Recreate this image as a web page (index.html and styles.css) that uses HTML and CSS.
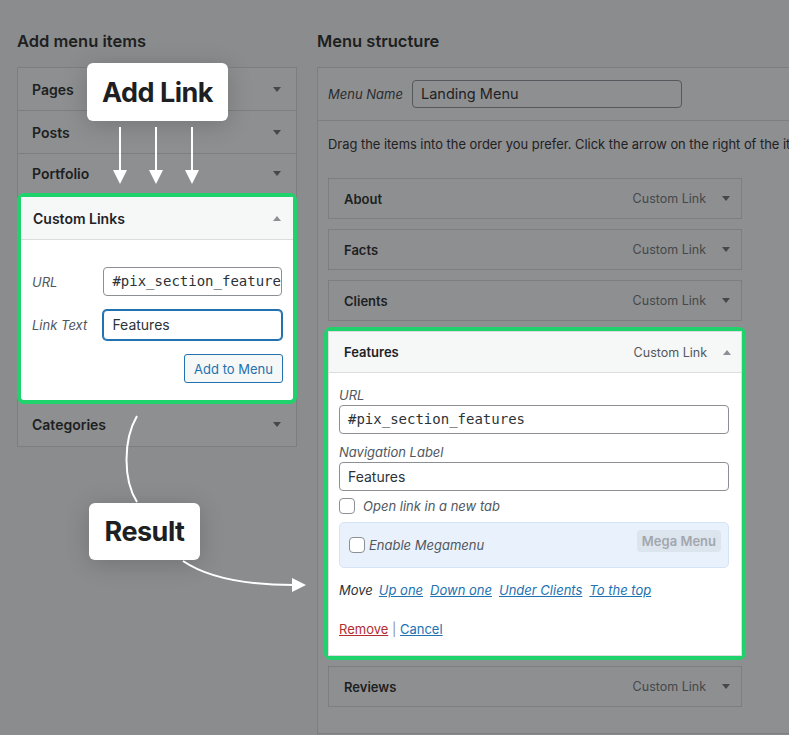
FILE: index.html
```html
<!DOCTYPE html>
<html lang="en">
<head>
    <meta charset="UTF-8">
    <title>Menus</title>
    <link rel="stylesheet" href="styles.css">
</head>
<body>
    <div class="page">
        <section class="col-left">
            <h2>Add menu items</h2>
            <div class="accordion">
                <div class="acc-row first">Pages <span class="caret"></span></div>
                <div class="acc-row">Posts <span class="caret"></span></div>
                <div class="acc-row short">Portfolio <span class="caret"></span></div>
                <div class="acc-open highlight">
                    <div class="acc-head">Custom Links <span class="caret up"></span></div>
                    <div class="acc-body">
                        <div class="field">
                            <label>URL</label>
                            <div class="text-input mono">#pix_section_features</div>
                        </div>
                        <div class="field">
                            <label>Link Text</label>
                            <div class="text-input focused">Features</div>
                        </div>
                        <div class="actions">
                            <button class="btn-secondary">Add to Menu</button>
                        </div>
                    </div>
                </div>
                <div class="acc-row last">Categories <span class="caret"></span></div>
            </div>
        </section>

        <section class="col-right">
            <h2>Menu structure</h2>
            <div class="menu-box">
                <div class="menu-name">
                    <label>Menu Name</label>
                    <div class="text-input name-input">Landing Menu</div>
                </div>
                <div class="menu-body">
                    <p class="hint">Drag the items into the order you prefer. Click the arrow on the right of the item to reveal additional configuration options.</p>
                    <div class="items">
                        <div class="item">
                            <span class="item-title">About</span>
                            <span class="item-type">Custom Link <span class="caret"></span></span>
                        </div>
                        <div class="item">
                            <span class="item-title">Facts</span>
                            <span class="item-type">Custom Link <span class="caret"></span></span>
                        </div>
                        <div class="item">
                            <span class="item-title">Clients</span>
                            <span class="item-type">Custom Link <span class="caret"></span></span>
                        </div>
                        <div class="item-open highlight">
                            <div class="item-head">
                                <span class="item-title">Features</span>
                                <span class="item-type">Custom Link <span class="caret up"></span></span>
                            </div>
                            <div class="item-body">
                                <label class="small-label">URL</label>
                                <div class="text-input mono wide">#pix_section_features</div>
                                <label class="small-label second">Navigation Label</label>
                                <div class="text-input wide">Features</div>
                                <div class="check-row">
                                    <span class="checkbox"></span>
                                    <span class="check-label">Open link in a new tab</span>
                                </div>
                                <div class="mega">
                                    <span class="checkbox"></span>
                                    <span class="check-label">Enable Megamenu</span>
                                    <span class="mega-btn">Mega Menu</span>
                                </div>
                                <div class="move-row">
                                    <span class="move-label">Move</span>
                                    <a href="#">Up one</a>
                                    <a href="#">Down one</a>
                                    <a href="#">Under Clients</a>
                                    <a href="#">To the top</a>
                                </div>
                                <div class="remove-row">
                                    <a class="remove" href="#">Remove</a> <span class="sep">|</span> <a href="#">Cancel</a>
                                </div>
                            </div>
                        </div>
                        <div class="item">
                            <span class="item-title">Reviews</span>
                            <span class="item-type">Custom Link <span class="caret"></span></span>
                        </div>
                    </div>
                </div>
            </div>
        </section>
    </div>

    <!-- annotations on top of the screenshot -->
    <div class="callout callout-add">Add Link</div>
    <div class="callout callout-result">Result</div>

    <svg class="arrows" width="789" height="735" viewBox="0 0 789 735">
        <g stroke="#fff" stroke-width="2" fill="none">
            <line x1="120" y1="127" x2="120" y2="172"/>
            <line x1="156" y1="127" x2="156" y2="172"/>
            <line x1="192" y1="127" x2="192" y2="172"/>
            <path d="M137 416 C 123 440, 123 480, 137 502"/>
            <path d="M183 561 C 208 578, 245 585, 294 585"/>
        </g>
        <g fill="#fff">
            <polygon points="113,170 127,170 120,184"/>
            <polygon points="149,170 163,170 156,184"/>
            <polygon points="185,170 199,170 192,184"/>
            <polygon points="292,578 306,585 292,592"/>
        </g>
    </svg>
</body>
</html>
```

FILE: styles.css
```css
* {
    box-sizing: border-box;
}

html, body {
    margin: 0;
}

body {
    width: 789px;
    height: 735px;
    position: relative;
    overflow: hidden;
    background: #8b8c8e;
    font-family: 'Inter', 'Noto Sans', sans-serif;
    font-size: 13px;
    color: #1d1f21;
}

.page {
    display: flex;
    gap: 20px;
    padding-left: 17px;
}

.col-left {
    width: 280px;
    flex: none;
}

.col-right {
    width: 472px;
    flex: none;
    overflow: hidden;
}

h2 {
    font-size: 16.5px;
    font-weight: 600;
    line-height: 20px;
    margin: 31px 0 16px;
    color: #1d1f21;
}

/* dimmed caret */
.caret {
    display: inline-block;
    width: 0;
    height: 0;
    border-left: 4px solid transparent;
    border-right: 4px solid transparent;
    border-top: 5px solid #45484b;
}

.caret.up {
    border-top: none;
    border-bottom: 5px solid #8c8f94;
}

/* left accordion */
.accordion {
    border: 1px solid #7d7e80;
    background: #8e8f91;
}

.acc-row {
    height: 43px;
    border-top: 1px solid #7d7e80;
    display: flex;
    align-items: center;
    justify-content: space-between;
    padding: 0 15px 0 14px;
    font-size: 14px;
    font-weight: 600;
}

.acc-row.first {
    border-top: none;
    height: 42px;
}

.acc-row.short {
    height: 40px;
}

.acc-row.last {
    border-top: none;
    height: 42px;
    padding-bottom: 2px;
}

.highlight {
    border: 4px solid #1fd26c;
    border-radius: 7px;
}

.acc-open {
    margin: 0 -1px;
    background: #fff;
    color: #1d2327;
}

.acc-head {
    height: 43px;
    background: #f6f7f7;
    border-bottom: 1px solid #dcdcde;
    display: flex;
    align-items: center;
    justify-content: space-between;
    padding: 0 12px;
    font-size: 14px;
    font-weight: 600;
}

.acc-body {
    padding: 27px 11px 17px 11px;
}

.field {
    display: flex;
    align-items: center;
    margin-bottom: 14px;
}

.field label {
    width: 72px;
    font-style: italic;
    color: #50575e;
    font-size: 13px;
}

.text-input {
    font-size: 14px;
    line-height: 27px;
    color: #2c3338;
    height: 29px;
    border: 1px solid #8c8f94;
    border-radius: 4px;
    padding: 0 8px;
    background: #fff;
    white-space: nowrap;
    overflow: hidden;
}

.field .text-input {
    width: 180px;
}

.text-input.mono {
    font-family: 'DejaVu Sans Mono', 'Liberation Mono', monospace;
    font-size: 14px;
}

.text-input.focused {
    height: 30px;
    line-height: 28px;
    border-color: #2271b1;
    box-shadow: 0 0 0 1px #2271b1;
}

.actions {
    display: flex;
    justify-content: flex-end;
    margin-right: -1px;
}

.btn-secondary {
    height: 29px;
    width: 99px;
    border: 1px solid #2271b1;
    border-radius: 3px;
    background: #f6f7f7;
    color: #2271b1;
    font-family: 'Inter', 'Noto Sans', sans-serif;
    font-size: 13px;
    padding: 0;
}

/* right column */
.menu-box {
    border: 1px solid #7d7e80;
    border-right: none;
    background: #8e8f91;
    height: 667px;
    width: 520px;
}

.menu-name {
    height: 53px;
    border-bottom: 1px solid #7d7e80;
    display: flex;
    align-items: center;
    padding-left: 10px;
}

.menu-name label {
    width: 84px;
    font-style: italic;
    color: #2a2c2e;
}

.text-input.name-input {
    width: 270px;
    height: 28px;
    line-height: 26px;
    background: #8e8f91;
    border-color: #55585c;
    color: #1f2123;
    font-size: 14.5px;
}

.menu-body {
    padding: 0 10px;
}

.hint {
    margin: 15px 0 24px;
    line-height: 18px;
    white-space: nowrap;
    font-size: 12.9px;
    color: #1f2123;
}

.items {
    width: 414px;
    display: flex;
    flex-direction: column;
    gap: 10px;
}

.item {
    height: 41px;
    border: 1px solid #7d7e80;
    display: flex;
    align-items: center;
    justify-content: space-between;
    padding: 0 11px 0 15px;
}

.item-title {
    font-weight: 600;
    font-size: 13px;
}

.item-type {
    display: flex;
    align-items: center;
    gap: 16px;
    color: #45484b;
    font-size: 12.5px;
}

.item-open {
    margin: -4px -4px;
    background: #fff;
    color: #1d2327;
}

.item-open .item-type {
    color: #50575e;
}

.item-head {
    height: 42px;
    background: #f6f7f7;
    border: 1px solid #dcdcde;
    display: flex;
    align-items: center;
    justify-content: space-between;
    padding: 0 10px 0 15px;
}

.item-body {
    padding: 14px 12px 17px 10px;
    display: flex;
    flex-direction: column;
    border: 1px solid #dcdcde;
    border-top: none;
}

.small-label {
    font-style: italic;
    color: #50575e;
    line-height: 16px;
}

.small-label.second {
    margin-top: 10px;
}

.text-input.wide {
    width: 100%;
    margin-top: 2px;
}

.check-row {
    display: flex;
    align-items: center;
    gap: 8px;
    margin-top: 7px;
    height: 16px;
}

.checkbox {
    width: 16px;
    height: 16px;
    border: 1px solid #8c8f94;
    border-radius: 4px;
    background: #fff;
    flex: none;
}

.check-label {
    font-style: italic;
    color: #50575e;
}

.mega {
    margin-top: 8px;
    height: 46px;
    background: #e9f1fc;
    border: 1px solid #d6e3f4;
    border-radius: 5px;
    display: flex;
    align-items: center;
    gap: 4px;
    padding: 0 7px 0 9px;
}

.mega-btn {
    margin-left: auto;
    margin-top: -8px;
    height: 22px;
    padding: 0 5px;
    background: #dce4ee;
    border-radius: 4px;
    color: #a2a7ad;
    font-weight: 600;
    line-height: 22px;
}

.move-row {
    margin-top: 13px;
    line-height: 18px;
    display: flex;
    gap: 7px;
    font-size: 13px;
    font-style: italic;
}

.move-label {
    color: #2c3338;
    margin-right: -1px;
}

a {
    color: #2271b1;
}

.remove-row {
    margin-top: 21px;
    line-height: 18px;
}

.remove-row a.remove {
    color: #b32d2e;
}

.sep {
    color: #8c8f94;
}

/* annotation overlays */
.callout {
    position: absolute;
    background: #fff;
    border-radius: 6px;
    box-shadow: 0 4px 24px rgba(0, 0, 0, 0.18);
    display: flex;
    align-items: center;
    justify-content: center;
    font-size: 27px;
    font-weight: 700;
    letter-spacing: -0.5px;
    color: #1d1f23;
}

.callout-add {
    left: 87px;
    top: 63px;
    width: 141px;
    height: 58px;
}

.callout-result {
    left: 89px;
    top: 503px;
    width: 111px;
    height: 57px;
}

.arrows {
    position: absolute;
    left: 0;
    top: 0;
    pointer-events: none;
}
```
